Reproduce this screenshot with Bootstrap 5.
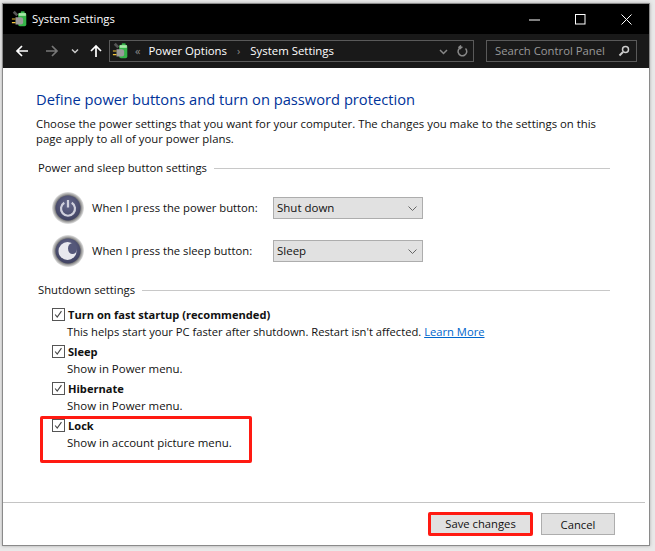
<!DOCTYPE html>
<html lang="en"><head><meta charset="utf-8"><title>System Settings</title>
<link href="https://cdn.jsdelivr.net/npm/bootstrap@5.3.0/dist/css/bootstrap.min.css" rel="stylesheet">
<style>
html,body{height:551px;overflow:hidden;background:#e9e9e9}
body{font-family:"Open Sans","Noto Sans",sans-serif;font-size:11.25px;color:#111;padding:3px 5px 0 2px}
.win{height:543px;background:#fff;border:1px solid #8a8a8a;box-shadow:0 0 3px #aaa}
.ttl{height:30px;background:#000;color:#fff;font-size:11.3px;padding-left:8px}
.tico{width:18px;height:18px;flex:none}
.ttxt{margin-left:3px}
.wbtn{width:46px;height:30px}
.tbar{height:34px;background:#191919;color:#fff;padding:0 12px 0 12px}
.nav2{margin-left:16px}
.nav3{margin-left:12px}
.nav4{margin-left:10px}
.addr{width:365px;height:22px;border:1px solid #5a5a5a;font-size:11.4px;padding:0 5px 0 2px;margin-left:6px}
.srch{width:151px;height:22px;border:1px solid #5a5a5a;color:#9a9a9a;font-size:11.3px;padding:0 6px 0 8px;margin-left:12px}
.crumb{color:#8a8a8a;font-size:11px;margin:0 10px}
.crumb1{margin:0 8px 0 5px}
.main{padding:21px 39px 0 33px}
h1.hd{font-size:14.7px;font-weight:400;color:#003399;margin:0 0 7px;line-height:20px}
.para{font-size:11.35px;line-height:15px;margin:0 0 14px;width:570px}
.sect{line-height:16px;margin:0 0 16px 2px}
.sect2{margin-top:15px}
.sect::after{content:"";flex:1;border-top:1px solid #c8c8c8;margin-left:7px}
.prow{height:32px;margin:0 0 11px 16px}
.orb{width:32px;height:32px;margin-right:8px;flex:none}
.plab{width:181px;flex:none}
.sel{width:150px;height:22px;background:#e1e1e1;border:1px solid #adadad;padding:0 5px 0 3px;font-size:11.5px}
.chks{margin:-8px 0 0 16px}
.chk{width:13px;height:13px;border:1px solid #555;background:#fff;margin-right:3px;margin-top:2px;flex:none}
.citem{line-height:17px;position:relative;width:540px}
.ctit{font-weight:700;font-size:11.1px;display:block}
.cdesc{line-height:17px;margin:0 0 3px 15px;font-size:11.45px}
.cdesc.lng{font-size:11.2px}
.cdesc a{color:#0066cc}
.redbox{position:absolute;left:-12px;top:-1px;width:212px;height:47px;border:3px solid #ff1a12;border-radius:2px;pointer-events:none}
.foot{height:43px;margin:auto 4px 0 0;border-top:1px solid #c4c4c4;padding:0 30px 0 0;flex:none}
.pbtn{width:74px;height:22px;background:#e1e1e1;border:1px solid #adadad;font-size:11.25px;color:#111;line-height:19px;padding:0;border-radius:0;margin-left:8px}
.savebtn{border:3px solid #ff1a12;width:105px;height:24px;border-radius:2px;line-height:18px}
</style></head><body>
<svg width="0" height="0" class="position-absolute"><defs>
 <symbol id="pwr" viewBox="0 0 20 20"><path d="M3 2l4 4" stroke="#555" stroke-width="3"/><rect x="8" y="3" width="9" height="15" rx="2" fill="#35b548"/><rect x="11" y="1.500" width="4" height="2" fill="#35b548"/><rect x="8.500" y="3.500" width="8" height="3" fill="#a8e8a8"/><path d="M5 8h6a2.500 2.500 0 0 1 2.500 2.500v3A2.500 2.500 0 0 1 11 16H5z" fill="#9a9a9a"/><path d="M1 10h4M1 14h4" stroke="#f2c53d" stroke-width="1.300"/></symbol>
 <radialGradient id="ring" cx=".5" cy=".5" r=".5"><stop offset=".78" stop-color="#777"/><stop offset=".9" stop-color="#b4b4b4"/><stop offset="1" stop-color="#e6e6e6"/></radialGradient>
 <radialGradient id="cen" cx=".5" cy=".35" r=".7"><stop offset="0" stop-color="#66698c"/><stop offset="1" stop-color="#3d3f5e"/></radialGradient>
</defs></svg>
<div class="win d-flex flex-column position-relative">
 <div class="ttl d-flex align-items-center">
  <svg class="tico"><use href="#pwr"/></svg>
  <span class="ttxt">System Settings</span>
  <div class="ms-auto d-flex">
   <div class="wbtn d-flex align-items-center justify-content-center"><svg width="11" height="11" viewBox="0 0 11 11"><path d="M0 6h11" stroke="#fff"/></svg></div>
   <div class="wbtn d-flex align-items-center justify-content-center"><svg width="11" height="11" viewBox="0 0 11 11"><rect x=".5" y=".5" width="9.500" height="9.500" fill="none" stroke="#fff"/></svg></div>
   <div class="wbtn d-flex align-items-center justify-content-center"><svg width="11" height="11" viewBox="0 0 11 11"><path d="M.5.5l10 10M10.500.5l-10 10" stroke="#fff"/></svg></div>
  </div>
 </div>
 <div class="tbar d-flex align-items-center">
  <svg width="14" height="14" viewBox="0 0 14 14"><path d="M13 7H2M7 2L2 7l5 5" fill="none" stroke="#fff" stroke-width="1.700"/></svg>
  <svg class="nav2" width="14" height="14" viewBox="0 0 14 14"><path d="M1 7h11M7 2l5 5-5 5" fill="none" stroke="#777" stroke-width="1.700"/></svg>
  <svg class="nav3" width="8" height="8" viewBox="0 0 8 8"><path d="M1 2.500l3 3 3-3" fill="none" stroke="#ccc" stroke-width="1.500"/></svg>
  <svg class="nav4" width="14" height="14" viewBox="0 0 14 14"><path d="M7 13V2M2 7l5-5 5 5" fill="none" stroke="#fff" stroke-width="1.700"/></svg>
  <div class="addr d-flex align-items-center">
   <svg class="tico"><use href="#pwr"/></svg>
   <span class="crumb crumb1">«</span><span>Power Options</span><span class="crumb">›</span><span>System Settings</span>
   <svg class="ms-auto" width="9" height="9" viewBox="0 0 9 9"><path d="M1 3l3.500 3.500L8 3" fill="none" stroke="#888" stroke-width="1.500"/></svg>
   <svg class="ms-2" width="12" height="12" viewBox="0 0 12 12"><path d="M9.500 3.500a4.300 4.300 0 1 1-3-1.300H4M5 .5l-2 1.700 2 1.800" fill="none" stroke="#888" stroke-width="1.500"/></svg>
  </div>
  <div class="srch d-flex align-items-center justify-content-between"><span>Search Control Panel</span><svg width="12" height="12" viewBox="0 0 12 12"><circle cx="7.500" cy="4.500" r="3" fill="none" stroke="#ccc" stroke-width="1.500"/><path d="M5 7L1.500 10.500" stroke="#ccc" stroke-width="2"/></svg></div>
 </div>
 <div class="main">
  <h1 class="hd">Define power buttons and turn on password protection</h1>
  <p class="para">Choose the power settings that you want for your computer. The changes you make to the settings on this page apply to all of your power plans.</p>
  <div class="sect d-flex align-items-center">Power and sleep button settings</div>
  <div class="prow d-flex align-items-center">
   <svg class="orb" viewBox="0 0 32 32"><circle cx="16" cy="16" r="16" fill="url(#ring)"/><circle cx="16" cy="16" r="12.500" fill="url(#cen)"/><path d="M12.300 10.800a7 7 0 1 0 7.400 0M16 8v7.500" fill="none" stroke="#d0d0dc" stroke-width="2.200"/></svg>
   <span class="plab">When I press the power button:</span>
   <div class="sel d-flex align-items-center justify-content-between"><span>Shut down</span><svg width="9" height="5" viewBox="0 0 9 5"><path d="M.5.500L4.500 4.500 8.500.5" fill="none" stroke="#666"/></svg></div>
  </div>
  <div class="prow d-flex align-items-center">
   <svg class="orb" viewBox="0 0 32 32"><circle cx="16" cy="16" r="16" fill="url(#ring)"/><circle cx="16" cy="16" r="12.500" fill="url(#cen)"/><circle cx="15.500" cy="16" r="9" fill="#e8e8ee"/><ellipse cx="20.500" cy="13.500" rx="4.500" ry="5.500" fill="#55587a"/></svg>
   <span class="plab">When I press the sleep button:</span>
   <div class="sel d-flex align-items-center justify-content-between"><span>Sleep</span><svg width="9" height="5" viewBox="0 0 9 5"><path d="M.5.500L4.500 4.500 8.500.5" fill="none" stroke="#666"/></svg></div>
  </div>
  <div class="sect sect2 d-flex align-items-center">Shutdown settings</div>
  <div class="chks">
   <div class="citem d-flex"><svg class="chk" viewBox="0 0 13 13"><path d="M2.500 6.500l2.500 3 5-7" fill="none" stroke="#444" stroke-width="1.300"/></svg><span class="ctit">Turn on fast startup (recommended)</span></div>
   <div class="cdesc lng">This helps start your PC faster after shutdown. Restart isn't affected. <a href="#">Learn More</a></div>
   <div class="citem d-flex"><svg class="chk" viewBox="0 0 13 13"><path d="M2.500 6.500l2.500 3 5-7" fill="none" stroke="#444" stroke-width="1.300"/></svg><span class="ctit">Sleep</span></div>
   <div class="cdesc">Show in Power menu.</div>
   <div class="citem d-flex"><svg class="chk" viewBox="0 0 13 13"><path d="M2.500 6.500l2.500 3 5-7" fill="none" stroke="#444" stroke-width="1.300"/></svg><span class="ctit">Hibernate</span></div>
   <div class="cdesc">Show in Power menu.</div>
   <div class="citem d-flex"><span class="redbox"></span><svg class="chk" viewBox="0 0 13 13"><path d="M2.500 6.500l2.500 3 5-7" fill="none" stroke="#444" stroke-width="1.300"/></svg><span class="ctit">Lock</span></div>
   <div class="cdesc">Show in account picture menu.</div>
  </div>
 </div>
 <div class="foot d-flex align-items-center justify-content-end">
  <button type="button" class="btn pbtn savebtn">Save changes</button>
  <button type="button" class="btn pbtn">Cancel</button>
 </div>
</div>
</body></html>
